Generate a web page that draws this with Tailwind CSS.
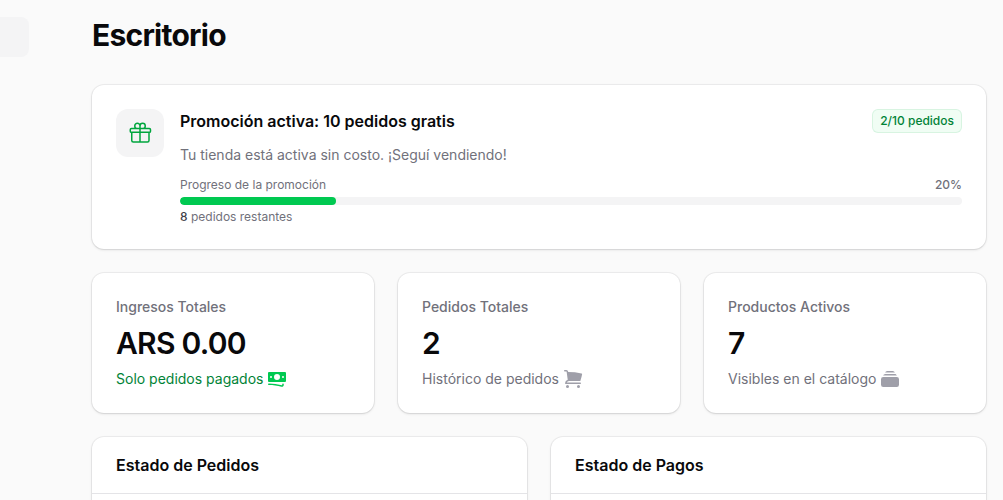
<!DOCTYPE html>
<html lang="es">
<head>
    <meta charset="UTF-8">
    <meta name="viewport" content="width=device-width, initial-scale=1.0">
    <title>Escritorio</title>
    <script src="https://cdn.jsdelivr.net/npm/@tailwindcss/browser@4"></script>
</head>
<body class="flex h-screen overflow-hidden bg-zinc-50 font-['Inter',sans-serif] text-zinc-950 antialiased">
    <!-- Sidebar -->
    <aside class="w-[29px] shrink-0 pt-[17px]">
        <div class="h-10 rounded-r-lg bg-zinc-100"></div>
    </aside>

    <main class="flex min-w-0 flex-1 flex-col pt-[17px] pr-[17px] pl-[63px]">
        <h1 class="mb-8 text-3xl font-bold tracking-tight">Escritorio</h1>

        <div class="flex flex-col gap-6">
            <!-- Promoción -->
            <section class="flex items-start gap-4 rounded-xl bg-white p-6 shadow-sm ring-1 ring-zinc-950/5">
                <div class="flex size-12 shrink-0 items-center justify-center rounded-xl bg-zinc-100">
                    <svg class="size-6 text-green-600" fill="none" viewBox="0 0 24 24" stroke-width="1.5" stroke="currentColor" aria-hidden="true">
                        <path stroke-linecap="round" stroke-linejoin="round" d="M21 11.25v8.25a1.5 1.5 0 0 1-1.5 1.5H5.25a1.5 1.5 0 0 1-1.5-1.5v-8.25M12 4.875A2.625 2.625 0 1 0 9.375 7.5H12m0-2.625V7.5m0-2.625A2.625 2.625 0 1 1 14.625 7.5H12m0 0V21m-8.625-9.75h18c.621 0 1.125-.504 1.125-1.125v-1.5c0-.621-.504-1.125-1.125-1.125h-18c-.621 0-1.125.504-1.125 1.125v1.5c0 .621.504 1.125 1.125 1.125Z" />
                    </svg>
                </div>
                <div class="flex min-w-0 flex-1 flex-col gap-3">
                    <div class="flex items-center justify-between gap-3">
                        <h2 class="text-base font-semibold">Promoción activa: 10 pedidos gratis</h2>
                        <span class="rounded-md bg-green-50 px-2 py-1 text-xs font-medium text-green-700 ring-1 ring-green-600/10 ring-inset">2/10 pedidos</span>
                    </div>
                    <p class="text-sm text-zinc-500">Tu tienda está activa sin costo. ¡Seguí vendiendo!</p>
                    <div class="flex flex-col gap-1 text-xs text-zinc-500">
                        <div class="flex justify-between">
                            <span>Progreso de la promoción</span>
                            <span class="font-medium">20%</span>
                        </div>
                        <div class="h-2 overflow-hidden rounded-full bg-zinc-100">
                            <div class="h-full rounded-full bg-green-500" style="width: 20%"></div>
                        </div>
                        <p><span class="font-medium text-zinc-700">8</span> pedidos restantes</p>
                    </div>
                </div>
            </section>

            <!-- Estadísticas -->
            <div class="grid grid-cols-3 gap-6">
                <div class="flex flex-col gap-2 rounded-xl bg-white p-6 shadow-sm ring-1 ring-zinc-950/5">
                    <span class="text-sm font-medium text-zinc-500">Ingresos Totales</span>
                    <div class="text-3xl font-semibold tracking-tight">ARS 0.00</div>
                    <div class="flex items-center gap-1 text-sm text-green-700">
                        <span>Solo pedidos pagados</span>
                        <svg class="size-5 text-green-500" viewBox="0 0 20 20" fill="currentColor" aria-hidden="true">
                            <path fill-rule="evenodd" clip-rule="evenodd" d="M1 4a1 1 0 0 1 1-1h16a1 1 0 0 1 1 1v8a1 1 0 0 1-1 1H2a1 1 0 0 1-1-1V4Zm12 4a3 3 0 1 1-6 0 3 3 0 0 1 6 0ZM4 9a1 1 0 1 0 0-2 1 1 0 0 0 0 2Zm13-1a1 1 0 1 1-2 0 1 1 0 0 1 2 0ZM1.75 14.5a.75.75 0 0 0 0 1.5c4.417 0 8.693.603 12.749 1.73 1.111.309 2.251-.512 2.251-1.696v-.784a.75.75 0 0 0-1.5 0v.784a.272.272 0 0 1-.35.25A49.043 49.043 0 0 0 1.75 14.5Z" />
                        </svg>
                    </div>
                </div>
                <div class="flex flex-col gap-2 rounded-xl bg-white p-6 shadow-sm ring-1 ring-zinc-950/5">
                    <span class="text-sm font-medium text-zinc-500">Pedidos Totales</span>
                    <div class="text-3xl font-semibold tracking-tight">2</div>
                    <div class="flex items-center gap-1 text-sm text-zinc-500">
                        <span>Histórico de pedidos</span>
                        <svg class="size-5 text-zinc-400" viewBox="0 0 20 20" fill="currentColor" aria-hidden="true">
                            <path d="M1 1.75A.75.75 0 0 1 1.75 1h1.628a1.75 1.75 0 0 1 1.734 1.51L5.18 3a65.25 65.25 0 0 1 13.36 1.412.75.75 0 0 1 .58.875 48.645 48.645 0 0 1-1.618 6.2.75.75 0 0 1-.712.513H6a2.503 2.503 0 0 0-2.292 1.5H17.25a.75.75 0 0 1 0 1.5H2.76a.75.75 0 0 1-.748-.807 4.002 4.002 0 0 1 2.716-3.486L3.626 2.716a.25.25 0 0 0-.248-.216H1.75A.75.75 0 0 1 1 1.75ZM6 17.5a1.5 1.5 0 1 1-3 0 1.5 1.5 0 0 1 3 0ZM15.5 19a1.5 1.5 0 1 0 0-3 1.5 1.5 0 0 0 0 3Z" />
                        </svg>
                    </div>
                </div>
                <div class="flex flex-col gap-2 rounded-xl bg-white p-6 shadow-sm ring-1 ring-zinc-950/5">
                    <span class="text-sm font-medium text-zinc-500">Productos Activos</span>
                    <div class="text-3xl font-semibold tracking-tight">7</div>
                    <div class="flex items-center gap-1 text-sm text-zinc-500">
                        <span>Visibles en el catálogo</span>
                        <svg class="size-5 text-zinc-400" viewBox="0 0 20 20" fill="currentColor" aria-hidden="true">
                            <path d="M5.127 3.502 5.25 3.5h9.5c.041 0 .082 0 .123.002A2.251 2.251 0 0 0 12.75 2h-5.5a2.25 2.25 0 0 0-2.123 1.502ZM1 10.25A2.25 2.25 0 0 1 3.25 8h13.5A2.25 2.25 0 0 1 19 10.25v5.5A2.25 2.25 0 0 1 16.75 18H3.25A2.25 2.25 0 0 1 1 15.75v-5.5ZM3.25 6.5c-.04 0-.082 0-.123.002A2.25 2.25 0 0 1 5.25 5h9.5c.98 0 1.814.627 2.123 1.502a3.819 3.819 0 0 0-.123-.002H3.25Z" />
                        </svg>
                    </div>
                </div>
            </div>

            <!-- Gráficos -->
            <div class="grid grid-cols-2 gap-6">
                <section class="rounded-xl bg-white shadow-sm ring-1 ring-zinc-950/5">
                    <h2 class="px-6 py-4 text-base font-semibold">Estado de Pedidos</h2>
                    <div class="h-12 border-t border-zinc-200"></div>
                </section>
                <section class="rounded-xl bg-white shadow-sm ring-1 ring-zinc-950/5">
                    <h2 class="px-6 py-4 text-base font-semibold">Estado de Pagos</h2>
                    <div class="h-12 border-t border-zinc-200"></div>
                </section>
            </div>
        </div>
    </main>
</body>
</html>
